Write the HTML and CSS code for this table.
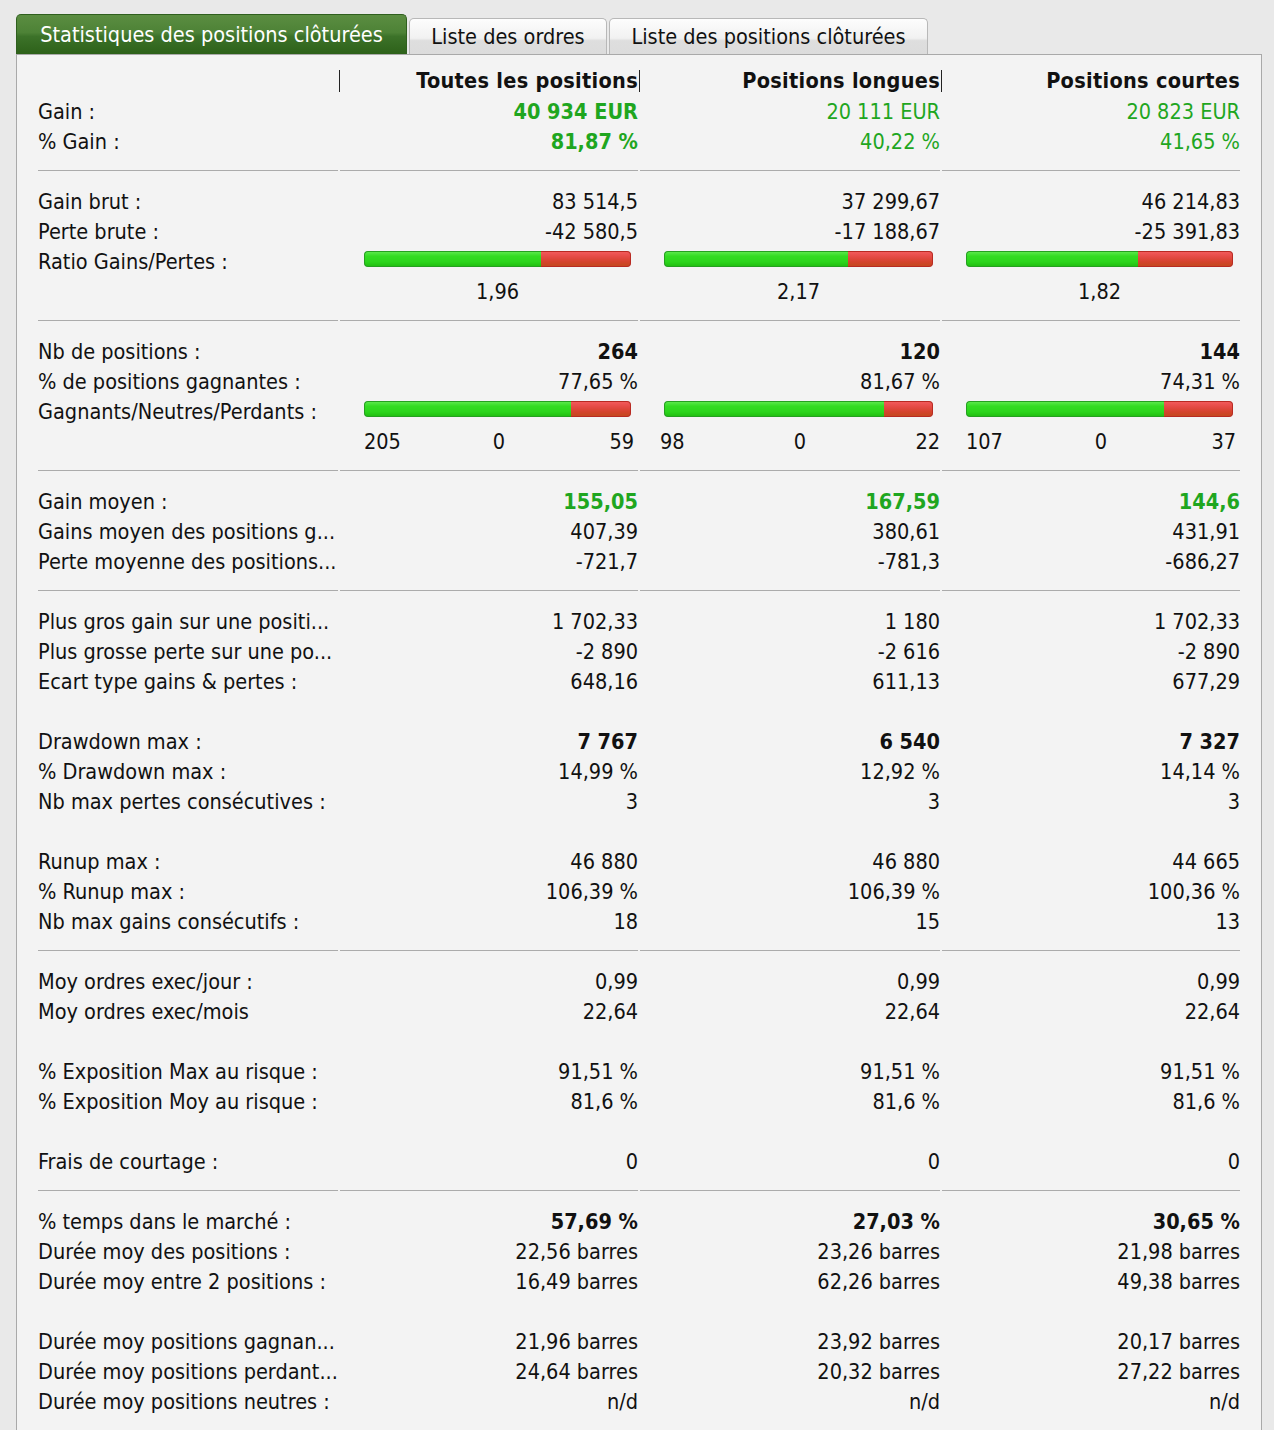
FILE: index.html
```html
<!DOCTYPE html>
<html lang="fr">
<head>
<meta charset="utf-8">
<title>Statistiques des positions clôturées</title>
<link rel="stylesheet" href="styles.css">
</head>
<body>
<div class="wrap">
  <div class="tabs">
    <div class="tab active t1">Statistiques des positions clôturées</div>
    <div class="tab t2">Liste des ordres</div>
    <div class="tab t3">Liste des positions clôturées</div>
  </div>
  <div class="panel">
    <table class="stats">
      <colgroup><col class="cl"><col class="c1"><col class="c2"><col class="c3"></colgroup>
      <tr class="head">
        <td><div class="hbar"></div></td>
        <td><div class="hbar">Toutes les positions</div></td>
        <td><div class="hbar">Positions longues</div></td>
        <td><div class="hnobar">Positions courtes</div></td>
      </tr>
      <tr><td class="lbl">Gain :</td><td class="v pos b">40 934 EUR</td><td class="v pos">20 111 EUR</td><td class="v pos">20 823 EUR</td></tr>
      <tr><td class="lbl">% Gain :</td><td class="v pos b">81,87 %</td><td class="v pos">40,22 %</td><td class="v pos">41,65 %</td></tr>
      <tr class="sep"><td><div></div></td><td><div></div></td><td><div></div></td><td><div></div></td></tr>
      <tr><td class="lbl">Gain brut :</td><td class="v">83 514,5</td><td class="v">37 299,67</td><td class="v">46 214,83</td></tr>
      <tr><td class="lbl">Perte brute :</td><td class="v">-42 580,5</td><td class="v">-17 188,67</td><td class="v">-25 391,83</td></tr>
      <tr>
        <td class="lbl">Ratio Gains/Pertes :</td>
        <td class="barcell"><div class="bar"><div class="g" style="width:66.2%"></div><div class="r"></div></div></td>
        <td class="barcell"><div class="bar"><div class="g" style="width:68.5%"></div><div class="r"></div></div></td>
        <td class="barcell"><div class="bar"><div class="g" style="width:64.5%"></div><div class="r"></div></div></td>
      </tr>
      <tr><td class="lbl"></td><td class="ctr">1,96</td><td class="ctr">2,17</td><td class="ctr">1,82</td></tr>
      <tr class="sep"><td><div></div></td><td><div></div></td><td><div></div></td><td><div></div></td></tr>
      <tr><td class="lbl">Nb de positions :</td><td class="v b">264</td><td class="v b">120</td><td class="v b">144</td></tr>
      <tr><td class="lbl">% de positions gagnantes :</td><td class="v">77,65 %</td><td class="v">81,67 %</td><td class="v">74,31 %</td></tr>
      <tr>
        <td class="lbl">Gagnants/Neutres/Perdants :</td>
        <td class="barcell"><div class="bar"><div class="g" style="width:77.7%"></div><div class="r"></div></div></td>
        <td class="barcell"><div class="bar"><div class="g" style="width:81.7%"></div><div class="r"></div></div></td>
        <td class="barcell"><div class="bar"><div class="g" style="width:74.3%"></div><div class="r"></div></div></td>
      </tr>
      <tr>
        <td class="lbl"></td>
        <td class="cnt k1"><div class="trio"><span>205</span><span>0</span><span class="rt">59</span></div></td>
        <td class="cnt k2"><div class="trio"><span>98</span><span>0</span><span class="rt">22</span></div></td>
        <td class="cnt k3"><div class="trio"><span>107</span><span>0</span><span class="rt">37</span></div></td>
      </tr>
      <tr class="sep"><td><div></div></td><td><div></div></td><td><div></div></td><td><div></div></td></tr>
      <tr><td class="lbl">Gain moyen :</td><td class="v pos b">155,05</td><td class="v pos b">167,59</td><td class="v pos b">144,6</td></tr>
      <tr><td class="lbl">Gains moyen des positions g...</td><td class="v">407,39</td><td class="v">380,61</td><td class="v">431,91</td></tr>
      <tr><td class="lbl">Perte moyenne des positions...</td><td class="v">-721,7</td><td class="v">-781,3</td><td class="v">-686,27</td></tr>
      <tr class="sep"><td><div></div></td><td><div></div></td><td><div></div></td><td><div></div></td></tr>
      <tr><td class="lbl">Plus gros gain sur une positi...</td><td class="v">1 702,33</td><td class="v">1 180</td><td class="v">1 702,33</td></tr>
      <tr><td class="lbl">Plus grosse perte sur une po...</td><td class="v">-2 890</td><td class="v">-2 616</td><td class="v">-2 890</td></tr>
      <tr><td class="lbl">Ecart type gains &amp; pertes :</td><td class="v">648,16</td><td class="v">611,13</td><td class="v">677,29</td></tr>
      <tr class="blank"><td></td><td></td><td></td><td></td></tr>
      <tr><td class="lbl">Drawdown max :</td><td class="v b">7 767</td><td class="v b">6 540</td><td class="v b">7 327</td></tr>
      <tr><td class="lbl">% Drawdown max :</td><td class="v">14,99 %</td><td class="v">12,92 %</td><td class="v">14,14 %</td></tr>
      <tr><td class="lbl">Nb max pertes consécutives :</td><td class="v">3</td><td class="v">3</td><td class="v">3</td></tr>
      <tr class="blank"><td></td><td></td><td></td><td></td></tr>
      <tr><td class="lbl">Runup max :</td><td class="v">46 880</td><td class="v">46 880</td><td class="v">44 665</td></tr>
      <tr><td class="lbl">% Runup max :</td><td class="v">106,39 %</td><td class="v">106,39 %</td><td class="v">100,36 %</td></tr>
      <tr><td class="lbl">Nb max gains consécutifs :</td><td class="v">18</td><td class="v">15</td><td class="v">13</td></tr>
      <tr class="sep"><td><div></div></td><td><div></div></td><td><div></div></td><td><div></div></td></tr>
      <tr><td class="lbl">Moy ordres exec/jour :</td><td class="v">0,99</td><td class="v">0,99</td><td class="v">0,99</td></tr>
      <tr><td class="lbl">Moy ordres exec/mois</td><td class="v">22,64</td><td class="v">22,64</td><td class="v">22,64</td></tr>
      <tr class="blank"><td></td><td></td><td></td><td></td></tr>
      <tr><td class="lbl">% Exposition Max au risque :</td><td class="v">91,51 %</td><td class="v">91,51 %</td><td class="v">91,51 %</td></tr>
      <tr><td class="lbl">% Exposition Moy au risque :</td><td class="v">81,6 %</td><td class="v">81,6 %</td><td class="v">81,6 %</td></tr>
      <tr class="blank"><td></td><td></td><td></td><td></td></tr>
      <tr><td class="lbl">Frais de courtage :</td><td class="v">0</td><td class="v">0</td><td class="v">0</td></tr>
      <tr class="sep"><td><div></div></td><td><div></div></td><td><div></div></td><td><div></div></td></tr>
      <tr><td class="lbl">% temps dans le marché :</td><td class="v b">57,69 %</td><td class="v b">27,03 %</td><td class="v b">30,65 %</td></tr>
      <tr><td class="lbl">Durée moy des positions :</td><td class="v">22,56 barres</td><td class="v">23,26 barres</td><td class="v">21,98 barres</td></tr>
      <tr><td class="lbl">Durée moy entre 2 positions :</td><td class="v">16,49 barres</td><td class="v">62,26 barres</td><td class="v">49,38 barres</td></tr>
      <tr class="blank"><td></td><td></td><td></td><td></td></tr>
      <tr><td class="lbl">Durée moy positions gagnan...</td><td class="v">21,96 barres</td><td class="v">23,92 barres</td><td class="v">20,17 barres</td></tr>
      <tr><td class="lbl">Durée moy positions perdant...</td><td class="v">24,64 barres</td><td class="v">20,32 barres</td><td class="v">27,22 barres</td></tr>
      <tr><td class="lbl">Durée moy positions neutres :</td><td class="v">n/d</td><td class="v">n/d</td><td class="v">n/d</td></tr>
    </table>
  </div>
</div>
</body>
</html>
```
FILE: styles.css
```css
html, body {
  margin: 0;
  padding: 0;
  background: #e9e9e9;
  font-family: "DejaVu Sans Condensed", "DejaVu Sans", "Liberation Sans", sans-serif;
  font-stretch: condensed;
  font-size: 21.5px;
  color: #111;
}

.wrap {
  padding: 14px 0 0 16px;
}

.tabs {
  display: flex;
  align-items: flex-end;
  gap: 2px;
  height: 40px;
}

.tab {
  box-sizing: border-box;
  height: 36px;
  line-height: 35px;
  text-align: center;
  border: 1px solid #b8b8b8;
  border-bottom: none;
  border-radius: 5px 5px 0 0;
  background: linear-gradient(#fdfdfd 0%, #f1f1f1 55%, #dedede 62%, #dcdcdc 100%);
  color: #111;
  white-space: nowrap;
}

.t1 { width: 391px; }
.t2 { width: 198px; }
.t3 { width: 319px; }

.tab.active {
  height: 40px;
  line-height: 39px;
  border-color: #2f5f1e;
  color: #fff;
  background: linear-gradient(#5b8d41 0%, #4d8236 45%, #3c7229 55%, #2d6119 100%);
}

.panel {
  box-sizing: border-box;
  width: 1246px;
  min-height: 1380px;
  border: 1px solid #a9a9a9;
  border-bottom: none;
  background: #f3f3f3;
  padding: 10px 19px 0 21px;
}

.stats {
  border-collapse: collapse;
  table-layout: fixed;
  width: 1204px;
}

.cl { width: 302px; }
.c1 { width: 300px; }
.c2 { width: 302px; }
.c3 { width: 300px; }

.stats tr {
  height: 30px;
}

.stats td {
  height: 30px;
  padding: 0;
  white-space: nowrap;
  overflow: hidden;
  vertical-align: middle;
  line-height: 30px;
}

.head, .head td {
  height: 32px;
}

.head td {
  font-weight: bold;
  text-align: right;
  letter-spacing: 0.3px;
}

.hbar {
  height: 22px;
  line-height: 22px;
  border-right: 1px solid #222;
  padding-right: 1px;
}

.hnobar {
  height: 22px;
  line-height: 22px;
  padding-right: 2px;
}

.lbl {
  text-align: left;
}

.v {
  text-align: right;
  padding-right: 2px !important;
}

.b { font-weight: bold; }
.pos { color: #1fa61f; }

.sep td div {
  height: 0;
  border-top: 1px solid #ababab;
  margin: 0 2px 0 0;
  position: relative;
  top: -2px;
}

.barcell {
  padding: 0 9px 0 24px !important;
}

.ctr {
  text-align: center;
  padding: 0 9px 0 24px !important;
}

.bar {
  display: flex;
  height: 16px;
  position: relative;
  top: -3px;
}

.bar .g {
  box-sizing: border-box;
  height: 16px;
  border: 1px solid #25a020;
  border-right: none;
  border-radius: 4px 0 0 4px;
  background: linear-gradient(#5ae84a 0%, #33dc22 30%, #2cd51c 70%, #22c012 100%);
}

.bar .r {
  box-sizing: border-box;
  flex: 1;
  height: 16px;
  border: 1px solid #b82a22;
  border-left: none;
  border-radius: 0 4px 4px 0;
  background: linear-gradient(#f25a5a 0%, #e44a44 35%, #d4432c 70%, #c4481e 100%);
}

.trio {
  display: grid;
  grid-template-columns: 1fr auto 1fr;
}

.trio .rt { text-align: right; }

.k1 { padding: 0 6px 0 24px !important; }
.k2 { padding: 0 2px 0 20px !important; }
.k3 { padding: 0 6px 0 24px !important; }
```
